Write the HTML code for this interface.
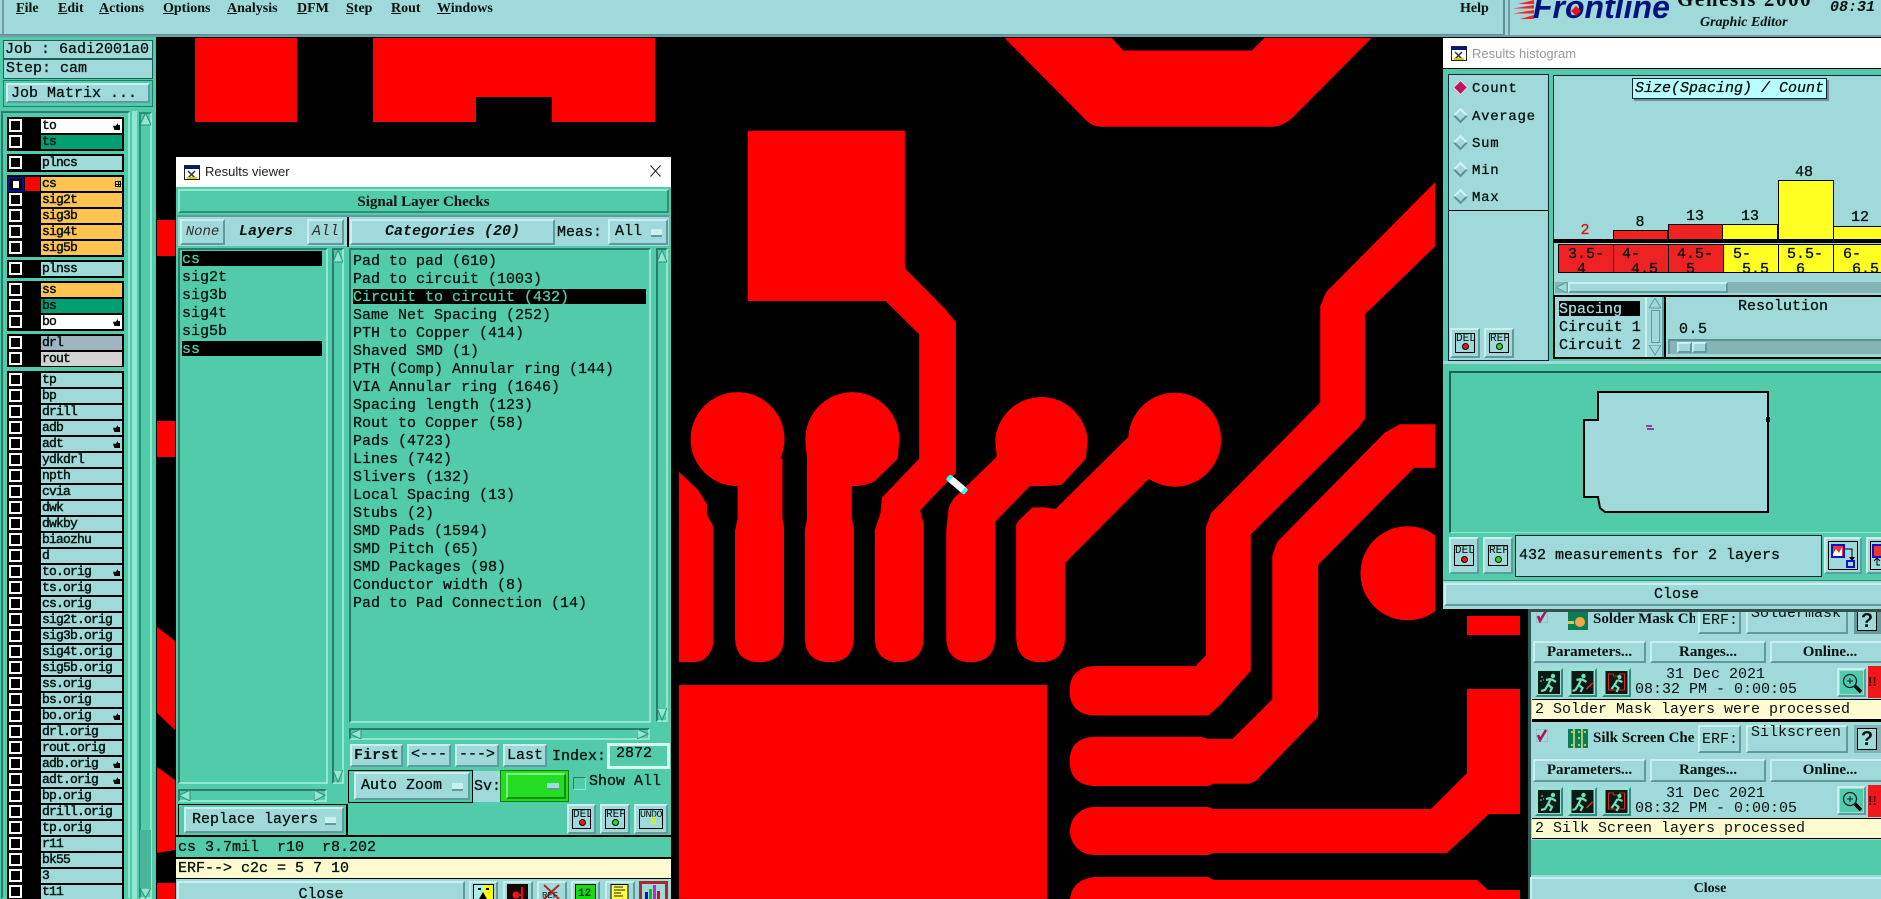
<!DOCTYPE html>
<html><head><meta charset="utf-8"><title>Genesis 2000</title>
<style>
html,body{margin:0;padding:0;background:#000;width:1881px;height:899px;overflow:hidden}
#p{position:relative;width:1881px;height:899px;overflow:hidden;background:#000;font-family:"Liberation Mono",monospace;color:#04130f}
#p div,#p svg.a{position:absolute;box-sizing:border-box}
.t{white-space:pre;font:15px/16px "Liberation Mono",monospace;-webkit-text-stroke:.3px;margin-top:1px}
.s{white-space:pre;font:bold 14px/16px "Liberation Serif",serif}
.c{text-align:center}
.b{background:#9fd9d9;border:2px solid;border-color:#c8f0ee #5f9a9c #5f9a9c #c8f0ee;white-space:pre;text-align:center;font:15px/20px "Liberation Mono",monospace;-webkit-text-stroke:.3px;padding-top:1px}
.sb{font:bold 15px/18px "Liberation Serif",serif;-webkit-text-stroke:0;padding-top:0}
.g{background:#52cbab;border:2px solid;border-color:#8fe8cf #2e8f78 #2e8f78 #8fe8cf}
.li{background:#52cbab;border:2px solid;border-color:#2a7d6c #8fe8cf #8fe8cf #2a7d6c}
.k{background:#000}
.r{left:41px;width:81px;height:14px;background:#9fd9d9;font:13px/14px "Liberation Mono",monospace;letter-spacing:-.8px;-webkit-text-stroke:.45px;padding-left:1px;white-space:pre}
.r:before{content:"";position:absolute;left:-32px;top:0;width:13px;height:13px;background:#000;border:2px solid #fff;box-sizing:border-box}
.r i{position:absolute;right:2px;top:4px;width:7px;height:7px;background:#000;clip-path:polygon(0 40%,40% 40%,70% 0,70% 30%,100% 30%,100% 100%,20% 100%)}
.o{background:#ffc34f}.w{background:#fff}.e{background:#009e73}
.d{background:#000;border:1px solid #000}
.bx{background:#9fd9d9;border:2px solid;border-color:#c8f0ee #5f9a9c #5f9a9c #c8f0ee}
.in{left:3px;top:3px;right:3px;bottom:3px;border:1px solid #000;font:11px/11px "Liberation Mono",monospace;text-align:center;overflow:hidden}
.dot{left:50%;margin-left:-3px;bottom:2px;width:7px;height:7px;border-radius:50%;border:1px solid #000}
.rd{left:0;width:11px;height:11px;transform:rotate(45deg);border:2px solid;border-color:#d6f3f2 #5f8f92 #5f8f92 #d6f3f2;box-sizing:border-box}
</style></head><body><div id="p">

<!-- artwork -->
<svg class="a" style="left:0;top:0" width="1881" height="899" viewBox="0 0 1881 899">
<g fill="#f00">
<rect x="195" y="38" width="102" height="84"/>
<path d="M373,38H655V122H552V97H476V122H373Z"/>
<rect x="157" y="220" width="18" height="36"/>
<rect x="157" y="421" width="18" height="36"/>
<path d="M157,627L175,641V730L157,713Z"/>
<path d="M157,767L175,780V850L157,853Z"/>
<rect x="157" y="883" width="18" height="16"/>
<g transform="translate(660,0) scale(.5102,.5733)">
<path d="M675,66H885L908,88H1160L1185,66H1395L1240,205Q1220,221 1200,221H865Q845,221 830,205Z"/>
<path d="M37,823L75,855L92,880V897L104,918V1125Q95,1155 65,1155H37Z"/>
<ellipse cx="152" cy="766" rx="92" ry="82"/>
<path d="M152,800H240V905L243,920V1110Q243,1155 195,1155Q147,1155 147,1110V925L152,905Z"/>
<path d="M285,766A92,82 0 0 1 469,766L466,800L420,840Q400,848 377,848Q330,848 300,825Q285,800 285,766Z"/>
<path d="M288,790H376V905L380,920V1110Q380,1155 332,1155Q284,1155 284,1110V925L288,905Z"/>
<path d="M172,228H480V468L560,540L580,562V825L510,890L517,915V1110Q517,1155 469,1155Q421,1155 421,1110V925L432,895L435,868L508,800V583L442,525H172Z"/>
<path d="M561,1110V925L566,885L575,870L660,797L657,766A91,82 0 0 1 838,766L835,800L788,845Q770,848 725,848L657,910V1110Q657,1155 609,1155Q561,1155 561,1110Z"/>
<path d="M698,1110V915L703,908L730,885H755L775,888L918,762A91,82 0 1 1 958,835L794,982V1110Q794,1155 746,1155Q698,1155 698,1110Z"/>
<path d="M1519,318L1305,510L1294,535V702L1080,895L1070,920V1143L1050,1162H850Q803,1165 803,1205Q803,1245 850,1248H1075L1100,1228L1158,1170V932L1370,745L1382,730V548L1519,430Z"/>
<path d="M1519,740H1450L1420,755L1210,945L1200,970V1220L1122,1289H1075L1060,1285H850Q803,1288 803,1328Q803,1368 850,1371H1075L1085,1367H1155L1168,1362L1290,1250V985L1478,816H1519Z"/>
<ellipse cx="1465" cy="1000" rx="92" ry="82"/>
<rect x="37" y="1195" width="722" height="373"/>
</g>
<path d="M1094,807H1208L1214,809H1431L1467,773V689H1520V814H1489L1447,853H1214L1208,855H1094A24,24 0 0 1 1094,807Z"/>
<path d="M1094,877H1208L1214,880H1477L1488,890H1520V899H1070Q1072,880 1094,877Z"/>
<rect x="1467" y="616" width="53" height="19"/>
</g>
<rect x="1435" y="37" width="8" height="575" fill="#000"/>
<g transform="translate(957,484.5) rotate(40)"><rect x="-12" y="-3.5" width="24" height="7" rx="2" fill="#3ff"/><rect x="-8" y="-3.5" width="16" height="7" fill="#fff"/></g>
</svg>

<!-- top bar -->
<div style="left:0;top:0;width:1881px;height:37px;background:#9fd9d9;border-bottom:2px solid #6f9fa2"></div>
<div style="left:2px;top:0;width:2px;height:35px;background:#6f9fa2"></div>
<div style="left:0;top:34px;width:1504px;height:1px;background:#5f8f92"></div>
<div style="left:1503px;top:0;width:2px;height:35px;background:#5f8f92"></div>
<div style="left:1508px;top:0;width:2px;height:36px;background:#6f9fa2"></div>
<div class="s" style="left:16px;top:1px"><u>F</u>ile</div>
<div class="s" style="left:58px;top:1px"><u>E</u>dit</div>
<div class="s" style="left:99px;top:1px"><u>A</u>ctions</div>
<div class="s" style="left:163px;top:1px"><u>O</u>ptions</div>
<div class="s" style="left:227px;top:1px"><u>A</u>nalysis</div>
<div class="s" style="left:297px;top:1px"><u>D</u>FM</div>
<div class="s" style="left:346px;top:1px"><u>S</u>tep</div>
<div class="s" style="left:391px;top:1px"><u>R</u>out</div>
<div class="s" style="left:437px;top:1px"><u>W</u>indows</div>
<div class="s" style="left:1460px;top:1px">Help</div>
<svg class="a" style="left:1512px;top:0" width="24" height="22"><path d="M22,0L6,4H22ZM22,5L1,8.5H22ZM22,10L1,13.5H22ZM22,15L8,19H22Z" fill="#f22"/></svg>
<div style="left:1533px;top:-11px;font:italic bold 32px/36px 'Liberation Sans',sans-serif;color:#00107c;white-space:pre">Frontline</div>
<svg class="a" style="left:1570px;top:5px" width="12" height="12"><path d="M6,1L11,6L6,11L1,6Z" fill="#e11"/></svg>
<div style="left:1677px;top:-12px;font:bold 21px/22px 'Liberation Serif',serif;letter-spacing:1.6px;white-space:pre;color:#04130f">Genesis 2000</div>
<div style="left:1700px;top:15px;font:italic bold 14px/16px 'Liberation Serif',serif;white-space:pre">Graphic Editor</div>
<div style="left:1830px;top:0;font:italic bold 15px/16px 'Liberation Mono',monospace;white-space:pre">08:31</div>

<!-- left panel -->
<div style="left:0;top:37px;width:156px;height:862px;background:#52cbab"></div>
<div style="left:3px;top:40px;width:150px;height:19px;background:#9fd9d9;border:1px solid #1d5f52"></div>
<div style="left:3px;top:59px;width:150px;height:20px;background:#9fd9d9;border:1px solid #1d5f52"></div>
<div class="t" style="left:5px;top:41px">Job : 6adi2001a0</div>
<div class="t" style="left:6px;top:60px">Step: cam</div>
<div style="left:3px;top:80px;width:150px;height:27px;background:#52cbab;border:1px solid #1d7f6a"></div>
<div class="b" style="left:6px;top:83px;width:144px;height:20px;text-align:left;padding-left:3px;line-height:16px">Job Matrix ...</div>
<div style="left:1px;top:111px;width:129px;height:788px;border:2px solid;border-color:#2a7d6c #8fe8cf transparent #2a7d6c"></div>
<div style="left:132px;top:111px;width:5px;height:788px;background:#8fe8cf"></div>
<div style="left:139px;top:112px;width:13px;height:787px;background:#52cbab;border:2px solid;border-color:#2e8f78 #8fe8cf #8fe8cf #2e8f78"></div>
<svg class="a" style="left:140px;top:113px" width="11" height="13"><path d="M5.5,0L11,12H0Z" fill="#8fe8cf" stroke="#2e8f78"/></svg>
<div style="left:140px;top:830px;width:11px;height:58px;background:#4ab59a"></div>
<svg class="a" style="left:140px;top:888px" width="11" height="11"><path d="M5.5,10L11,0H0Z" fill="#8fe8cf" stroke="#2e8f78"/></svg>

<div class="k" style="left:7px;top:117px;width:117px;height:34px"></div>
<div class="k" style="left:7px;top:154px;width:117px;height:18px"></div>
<div class="k" style="left:7px;top:175px;width:117px;height:82px"></div>
<div class="k" style="left:7px;top:260px;width:117px;height:18px"></div>
<div class="k" style="left:7px;top:281px;width:117px;height:50px"></div>
<div class="k" style="left:7px;top:334px;width:117px;height:33px"></div>
<div class="k" style="left:7px;top:371px;width:117px;height:528px"></div>

<div class="r w" style="top:119px">to<i></i></div>
<div class="r e" style="top:135px">ts</div>
<div class="r" style="top:156px">plncs</div>
<div class="r o" style="top:177px">cs</div>
<div class="r o" style="top:193px">sig2t</div>
<div class="r o" style="top:209px">sig3b</div>
<div class="r o" style="top:225px">sig4t</div>
<div class="r o" style="top:241px">sig5b</div>
<div class="r" style="top:262px">plnss</div>
<div class="r o" style="top:283px">ss</div>
<div class="r e" style="top:299px">bs</div>
<div class="r w" style="top:315px">bo<i></i></div>
<div class="r" style="top:336px;background:#9fb5bf">drl</div>
<div class="r" style="top:352px;background:#d3d3d3">rout</div>
<div class="r" style="top:373px">tp</div>
<div class="r" style="top:389px">bp</div>
<div class="r" style="top:405px">drill</div>
<div class="r" style="top:421px">adb<i></i></div>
<div class="r" style="top:437px">adt<i></i></div>
<div class="r" style="top:453px">ydkdrl</div>
<div class="r" style="top:469px">npth</div>
<div class="r" style="top:485px">cvia</div>
<div class="r" style="top:501px">dwk</div>
<div class="r" style="top:517px">dwkby</div>
<div class="r" style="top:533px">biaozhu</div>
<div class="r" style="top:549px">d</div>
<div class="r" style="top:565px">to.orig<i></i></div>
<div class="r" style="top:581px">ts.orig</div>
<div class="r" style="top:597px">cs.orig</div>
<div class="r" style="top:613px">sig2t.orig</div>
<div class="r" style="top:629px">sig3b.orig</div>
<div class="r" style="top:645px">sig4t.orig</div>
<div class="r" style="top:661px">sig5b.orig</div>
<div class="r" style="top:677px">ss.orig</div>
<div class="r" style="top:693px">bs.orig</div>
<div class="r" style="top:709px">bo.orig<i></i></div>
<div class="r" style="top:725px">drl.orig</div>
<div class="r" style="top:741px">rout.orig</div>
<div class="r" style="top:757px">adb.orig<i></i></div>
<div class="r" style="top:773px">adt.orig<i></i></div>
<div class="r" style="top:789px">bp.orig</div>
<div class="r" style="top:805px">drill.orig</div>
<div class="r" style="top:821px">tp.orig</div>
<div class="r" style="top:837px">r11</div>
<div class="r" style="top:853px">bk55</div>
<div class="r" style="top:869px">3</div>
<div class="r" style="top:885px">t11</div>
<div style="left:8px;top:177px;width:16px;height:15px;background:#00108f"></div>
<div style="left:10px;top:179px;width:12px;height:11px;background:#000;border:2px solid #000"></div>
<div style="left:13px;top:181px;width:6px;height:7px;background:#fff"></div>
<div style="left:25px;top:177px;width:15px;height:14px;background:#f00"></div>
<div style="left:115px;top:181px;width:6px;height:6px;border:1px solid #000;background:linear-gradient(#000,#000) center/100% 1px no-repeat,linear-gradient(#000,#000) center/1px 100% no-repeat"></div>

<!-- results viewer -->
<div style="left:176px;top:157px;width:495px;height:742px;background:#52cbab"></div>
<div style="left:176px;top:157px;width:495px;height:30px;background:#fff"></div>
<svg class="a" style="left:184px;top:165px" width="16" height="15"><rect x=".5" y=".5" width="15" height="14" fill="#fff" stroke="#222"/><rect x="1" y="1" width="14" height="3" fill="#001a80"/><path d="M4,6L11,13M11,6L4,13" stroke="#333" stroke-width="1.5"/><path d="M3,13H13" stroke="#cc0" stroke-width="2"/></svg>
<div style="left:205px;top:164px;font:13px/16px 'Liberation Sans',sans-serif;color:#222;white-space:pre">Results viewer</div>
<svg class="a" style="left:650px;top:165px" width="11" height="12"><path d="M.5,.5L10.5,11.5M10.5,.5L.5,11.5" stroke="#222" stroke-width="1"/></svg>

<div class="g c" style="left:178px;top:189px;width:491px;height:24px;font:bold 15px/22px 'Liberation Serif',serif;white-space:pre">Signal Layer Checks</div>
<div class="k" style="left:177px;top:215px;width:492px;height:2px;background:#5f9a9c"></div>
<div style="left:178px;top:217px;width:491px;height:29px;background:#9fd9d9"></div>
<div style="left:347px;top:217px;width:2px;height:30px;background:#000"></div>
<div class="b" style="left:180px;top:219px;width:45px;height:26px;font-style:italic;font-size:14px;-webkit-text-stroke:0;color:#333">None</div>
<div class="b" style="left:228px;top:219px;width:76px;height:26px;font-style:italic;font-weight:bold;-webkit-text-stroke:0;border-color:#9fd9d9">Layers</div>
<div class="b" style="left:307px;top:219px;width:37px;height:26px;font-style:italic;-webkit-text-stroke:0;color:#333">All</div>
<div class="b" style="left:350px;top:219px;width:205px;height:26px;font-style:italic;font-weight:bold;-webkit-text-stroke:0;line-height:20px">Categories (20)</div>
<div class="t" style="left:557px;top:224px">Meas:</div>
<div class="b" style="left:608px;top:219px;width:60px;height:26px;text-align:left;padding-left:5px;line-height:20px">All<span style="position:absolute;right:4px;top:8px;width:11px;height:6px;background:#c8f0ee;border-bottom:2px solid #5f9a9c"></span></div>

<!-- left list -->
<div class="li" style="left:178px;top:248px;width:150px;height:536px"></div>
<div class="k" style="left:182px;top:251px;width:140px;height:15px"></div>
<div class="k" style="left:182px;top:341px;width:140px;height:15px"></div>
<div class="t" style="left:182px;top:251px;color:#52cbab">cs</div>
<div class="t" style="left:182px;top:269px">sig2t</div>
<div class="t" style="left:182px;top:287px">sig3b</div>
<div class="t" style="left:182px;top:305px">sig4t</div>
<div class="t" style="left:182px;top:323px">sig5b</div>
<div class="t" style="left:182px;top:341px;color:#52cbab">ss</div>
<div class="li" style="left:332px;top:248px;width:12px;height:536px"></div>
<svg class="a" style="left:333px;top:250px" width="10" height="13"><path d="M5,0L10,12H0Z" fill="#8fe8cf" stroke="#2e8f78"/></svg>
<svg class="a" style="left:333px;top:770px" width="10" height="13"><path d="M5,12L10,0H0Z" fill="#8fe8cf" stroke="#2e8f78"/></svg>
<div class="li" style="left:178px;top:789px;width:149px;height:13px"></div>
<svg class="a" style="left:179px;top:790px" width="12" height="11"><path d="M0,5.5L11,0V11Z" fill="#8fe8cf" stroke="#2e8f78"/></svg>
<svg class="a" style="left:314px;top:790px" width="12" height="11"><path d="M11,5.5L0,0V11Z" fill="#8fe8cf" stroke="#2e8f78"/></svg>
<div class="k" style="left:178px;top:804px;width:170px;height:32px"></div>
<div style="left:179px;top:805px;width:167px;height:30px;background:#52cbab"></div>
<div class="b" style="left:184px;top:807px;width:160px;height:26px;text-align:left;padding-left:6px;line-height:20px">Replace layers<span style="position:absolute;right:6px;top:8px;width:11px;height:6px;background:#c8f0ee;border-bottom:2px solid #5f9a9c"></span></div>

<!-- categories -->
<div class="li" style="left:349px;top:248px;width:302px;height:475px"></div>
<div class="k" style="left:353px;top:289px;width:293px;height:15px"></div>
<div class="t" style="left:353px;top:252px;line-height:18px">Pad to pad (610)
Pad to circuit (1003)
<span style="color:#52cbab">Circuit to circuit (432)</span>
Same Net Spacing (252)
PTH to Copper (414)
Shaved SMD (1)
PTH (Comp) Annular ring (144)
VIA Annular ring (1646)
Spacing length (123)
Rout to Copper (58)
Pads (4723)
Lines (742)
Slivers (132)
Local Spacing (13)
Stubs (2)
SMD Pads (1594)
SMD Pitch (65)
SMD Packages (98)
Conductor width (8)
Pad to Pad Connection (14)</div>
<div class="li" style="left:656px;top:248px;width:12px;height:474px"></div>
<svg class="a" style="left:657px;top:250px" width="10" height="13"><path d="M5,0L10,12H0Z" fill="#8fe8cf" stroke="#2e8f78"/></svg>
<svg class="a" style="left:657px;top:708px" width="10" height="13"><path d="M5,12L10,0H0Z" fill="#8fe8cf" stroke="#2e8f78"/></svg>
<div class="li" style="left:349px;top:728px;width:301px;height:12px"></div>
<svg class="a" style="left:350px;top:729px" width="12" height="10"><path d="M0,5L11,0V10Z" fill="#8fe8cf" stroke="#2e8f78"/></svg>
<svg class="a" style="left:637px;top:729px" width="12" height="10"><path d="M11,5L0,0V10Z" fill="#8fe8cf" stroke="#2e8f78"/></svg>

<div class="b" style="left:350px;top:744px;width:53px;height:23px;font-weight:bold;-webkit-text-stroke:0;line-height:18px">First</div>
<div class="b" style="left:407px;top:744px;width:44px;height:23px;line-height:16px">&lt;---</div>
<div class="b" style="left:455px;top:744px;width:44px;height:23px;line-height:16px">---&gt;</div>
<div class="b" style="left:503px;top:744px;width:44px;height:23px;line-height:18px">Last</div>
<div class="t" style="left:552px;top:748px">Index:</div>
<div style="left:607px;top:743px;width:63px;height:26px;border:3px solid;border-color:#d8f8f0;background:#52cbab"></div>
<div class="t" style="left:616px;top:745px">2872</div>

<div class="k" style="left:348px;top:770px;width:125px;height:33px"></div>
<div style="left:349px;top:771px;width:123px;height:31px;background:#52cbab"></div>
<div class="b" style="left:354px;top:772px;width:116px;height:28px;text-align:left;padding-left:5px;line-height:21px">Auto Zoom<span style="position:absolute;right:5px;top:9px;width:11px;height:6px;background:#c8f0ee;border-bottom:2px solid #5f9a9c"></span></div>
<div style="left:473px;top:771px;width:27px;height:31px;background:#9fd9d9"></div>
<div class="t" style="left:474px;top:778px">Sv:</div>
<div style="left:500px;top:770px;width:69px;height:32px;background:#22dd22;border:1px solid #0d7d0d"></div>
<div style="left:506px;top:773px;width:60px;height:26px;background:#22dd22;border:2px solid;border-color:#7ff07f #0f8f0f #0f8f0f #7ff07f"></div>
<div style="left:547px;top:783px;width:12px;height:7px;background:#9fd9d9;border-bottom:2px solid #5f9a9c"></div>
<div style="left:573px;top:777px;width:13px;height:13px;background:#52cbab;border:1px solid;border-color:#2a7d6c #8fe8cf #8fe8cf #2a7d6c"></div>
<div class="t" style="left:589px;top:773px">Show All</div>

<div class="bx" style="left:567px;top:804px;width:29px;height:30px"><div class="in">DEL<div class="dot" style="background:#f11"></div></div></div>
<div class="bx" style="left:600px;top:804px;width:30px;height:30px"><div class="in">REF<div class="dot" style="background:#2d2"></div></div></div>
<div class="bx" style="left:634px;top:804px;width:34px;height:30px"><div class="in" style="font-size:10px;letter-spacing:-.5px">UNDO<div style="left:9px;bottom:1px;width:8px;height:10px;color:#ee0;font:bold 11px/10px 'Liberation Mono'">5</div></div></div>

<div class="k" style="left:176px;top:835px;width:495px;height:2px"></div>
<div class="t" style="left:178px;top:839px">cs 3.7mil  r10  r8.202</div>
<div class="k" style="left:176px;top:857px;width:495px;height:2px"></div>
<div style="left:176px;top:859px;width:495px;height:19px;background:#fffbd0"></div>
<div class="t" style="left:178px;top:860px">ERF--&gt; c2c = 5 7 10</div>
<div class="k" style="left:176px;top:878px;width:495px;height:1px"></div>
<div style="left:176px;top:879px;width:495px;height:20px;background:#9fd9d9"></div>
<div class="b" style="left:177px;top:881px;width:288px;height:26px;line-height:22px">Close</div>

<div class="bx" style="left:469px;top:881px;width:29px;height:26px"></div>
<svg class="a" style="left:473px;top:884px" width="21" height="15"><rect width="21" height="15" fill="#000"/><rect x="10" y="1" width="10" height="14" fill="#ff0"/><rect x="1" y="1" width="9" height="14" fill="#aee"/><path d="M6,15L10,8L14,15Z" fill="#000"/><rect x="5" y="4" width="3" height="2"/><rect x="13" y="4" width="3" height="2"/></svg>
<div class="bx" style="left:503px;top:881px;width:30px;height:26px"></div>
<svg class="a" style="left:507px;top:884px" width="21" height="15"><rect width="21" height="15" fill="#1a0505"/><circle cx="9" cy="11" r="3.5" fill="#f11"/><path d="M11,11H15M15,3V15" stroke="#d11" stroke-width="2"/></svg>
<div class="bx" style="left:537px;top:881px;width:30px;height:26px"></div>
<svg class="a" style="left:541px;top:884px" width="21" height="15"><path d="M3,1L18,15M18,1L3,15" stroke="#b22" stroke-width="2"/><text x="1" y="14" font-family="Liberation Mono" font-size="9" fill="#222">REF</text></svg>
<div class="bx" style="left:571px;top:881px;width:29px;height:26px"></div>
<svg class="a" style="left:575px;top:884px" width="21" height="15"><rect x=".5" y=".5" width="20" height="15" fill="#1d1" stroke="#000"/><text x="3" y="12" font-family="Liberation Mono" font-weight="bold" font-size="11" fill="#032">12</text></svg>
<div class="bx" style="left:605px;top:881px;width:30px;height:26px"></div>
<svg class="a" style="left:609px;top:884px" width="21" height="15"><rect x="2" y=".5" width="17" height="15" fill="#ff4" stroke="#000"/><path d="M5,3H14M5,6H16M5,9H12M5,12H14" stroke="#222"/></svg>
<div style="left:639px;top:881px;width:29px;height:18px;background:#a82a2a"></div>
<svg class="a" style="left:642px;top:884px" width="23" height="15"><rect width="23" height="15" fill="#9fd9d9"/><rect x="3" y="8" width="3" height="7" fill="#11c"/><rect x="7" y="5" width="3" height="10" fill="#1b1"/><rect x="11" y="1" width="3" height="14" fill="#c2c"/><rect x="15" y="7" width="3" height="8" fill="#c11"/></svg>

<!-- checks window -->
<div style="left:1528px;top:600px;width:353px;height:299px;background:#9fd9d9"></div>
<div style="left:1528px;top:600px;width:3px;height:299px;background:#2f5a55"></div>
<svg class="a" style="left:1536px;top:610px" width="12" height="13"><rect width="12" height="13" fill="#9fd9d9" stroke="#7fb5b5"/><path d="M2,6L4,11L10,1" stroke="#b0105a" stroke-width="2.5" fill="none"/></svg>
<svg class="a" style="left:1568px;top:610px" width="20" height="20"><rect width="20" height="20" fill="#0a7d55"/><circle cx="12" cy="12" r="5" fill="#f0a848"/><rect y="11" width="6" height="3" fill="#e0c060"/></svg>
<div class="s" style="left:1593px;top:611px;font-size:15px;width:102px;overflow:hidden">Solder Mask Check</div>
<div class="bx t" style="left:1698px;top:607px;width:43px;height:27px;padding:2px 0 0 2px;line-height:20px;-webkit-text-stroke:0;margin:0">ERF:</div>
<div class="bx" style="left:1746px;top:607px;width:102px;height:27px;overflow:hidden"><div class="t" style="left:3px;top:-4px;-webkit-text-stroke:0">Soldermask</div></div>
<div style="left:1854px;top:610px;width:27px;height:24px;background:#5f9a9c"></div>
<div style="left:1857px;top:610px;width:20px;height:21px;background:#9fd9d9;border:1px solid #000;font:bold 20px/20px 'Liberation Sans',sans-serif;text-align:center">?</div>

<div class="b sb" style="left:1533px;top:641px;width:113px;height:22px">Parameters...</div>
<div class="b sb" style="left:1650px;top:641px;width:116px;height:22px">Ranges...</div>
<div class="b sb" style="left:1770px;top:641px;width:120px;height:22px;">Online...</div>

<div class="bx" style="left:1535px;top:668px;width:28px;height:29px;border-color:#8fe8cf #2e8f78 #2e8f78 #8fe8cf"></div>
<svg class="a" style="left:1538px;top:671px" width="22" height="23" viewBox="0 0 22 23"><rect width="22" height="23" fill="#0b1a14"/><circle cx="15" cy="5" r="2.2" fill="#6fe0b8"/><path d="M13,8L10,14L14,17L12,21M10,14L7,19L3,20M13,8L18,11M13,8L8,9" stroke="#6fe0b8" stroke-width="2.2" fill="none"/><path d="M3,6h2M5,9h1M2,10h2" stroke="#6fe0b8"/></svg>
<div class="bx" style="left:1568px;top:668px;width:29px;height:29px;border-color:#8fe8cf #2e8f78 #2e8f78 #8fe8cf"></div>
<svg class="a" style="left:1571px;top:671px" width="23" height="23" viewBox="0 0 22 23"><rect width="22" height="23" fill="#0b1a14"/><circle cx="12" cy="5" r="2.2" fill="#6fe0b8"/><path d="M10,8L7,14L11,17L9,21M7,14L4,19L1,20M10,8L15,11M10,8L5,9" stroke="#6fe0b8" stroke-width="2.2" fill="none"/><path d="M15,18L21,12" stroke="#e22" stroke-width="1.5"/></svg>
<div class="bx" style="left:1602px;top:668px;width:29px;height:29px;border-color:#8fe8cf #2e8f78 #2e8f78 #8fe8cf"></div>
<svg class="a" style="left:1605px;top:671px" width="23" height="23" viewBox="0 0 22 23"><rect width="22" height="23" fill="#0b1a14"/><path d="M3,3H8V5H14V3H19V19H3Z" fill="none" stroke="#d22"/><circle cx="14" cy="6" r="2" fill="#6fe0b8"/><path d="M12,9L9,14L13,17L11,21M9,14L6,18M12,9L17,11" stroke="#6fe0b8" stroke-width="2.2" fill="none"/></svg>

<div class="t c" style="left:1635px;top:666px;width:161px;-webkit-text-stroke:0">31 Dec 2021</div>
<div class="t" style="left:1635px;top:681px;-webkit-text-stroke:0">08:32 PM - 0:00:05</div>
<div class="bx" style="left:1837px;top:668px;width:29px;height:29px"></div>
<svg class="a" style="left:1840px;top:671px" width="23" height="23"><rect width="23" height="23" fill="#52cbab"/><circle cx="10" cy="10" r="6.5" fill="none" stroke="#123" stroke-width="1.3"/><path d="M7,10H13M10,7V13" stroke="#123"/><path d="M15,15L21,21" stroke="#000" stroke-width="3.5"/></svg>
<div style="left:1868px;top:666px;width:13px;height:32px;background:#f01818;color:#400;font:bold 13px/32px 'Liberation Sans',sans-serif;white-space:pre">!!</div>

<div style="left:1532px;top:699px;width:349px;height:21px;background:#fffbd0;border-top:1px solid #000;border-bottom:1px solid #000"></div>
<div class="t" style="left:1535px;top:701px;-webkit-text-stroke:0">2 Solder Mask layers were processed</div>
<div class="k" style="left:1532px;top:720px;width:349px;height:2px"></div>

<svg class="a" style="left:1536px;top:729px" width="12" height="13"><rect width="12" height="13" fill="#9fd9d9" stroke="#7fb5b5"/><path d="M2,6L4,11L10,1" stroke="#b0105a" stroke-width="2.5" fill="none"/></svg>
<svg class="a" style="left:1568px;top:729px" width="20" height="19"><rect width="20" height="19" fill="#0a7d55"/><path d="M3,3h2M10,3h2M16,3h2M3,16h2M10,16h2M16,16h2M10,9h2M6,0V19M14,0V19" stroke="#e8e070" stroke-width="1.5"/></svg>
<div class="s" style="left:1593px;top:730px;font-size:15px;width:102px;overflow:hidden">Silk Screen Check</div>
<div class="bx t" style="left:1698px;top:725px;width:43px;height:28px;padding:3px 0 0 2px;line-height:20px;-webkit-text-stroke:0;margin:0">ERF:</div>
<div class="bx" style="left:1746px;top:725px;width:102px;height:28px"></div>
<div class="t" style="left:1751px;top:724px;-webkit-text-stroke:0">Silkscreen</div>
<div style="left:1854px;top:725px;width:27px;height:28px;background:#7fb5b5"></div>
<div style="left:1857px;top:728px;width:20px;height:22px;background:#9fd9d9;border:1px solid #000;font:bold 20px/20px 'Liberation Sans',sans-serif;text-align:center">?</div>

<div class="b sb" style="left:1533px;top:759px;width:113px;height:23px">Parameters...</div>
<div class="b sb" style="left:1650px;top:759px;width:116px;height:23px">Ranges...</div>
<div class="b sb" style="left:1770px;top:759px;width:120px;height:23px">Online...</div>

<div class="bx" style="left:1535px;top:787px;width:28px;height:29px;border-color:#8fe8cf #2e8f78 #2e8f78 #8fe8cf"></div>
<svg class="a" style="left:1538px;top:790px" width="22" height="23" viewBox="0 0 22 23"><rect width="22" height="23" fill="#0b1a14"/><circle cx="15" cy="5" r="2.2" fill="#6fe0b8"/><path d="M13,8L10,14L14,17L12,21M10,14L7,19L3,20M13,8L18,11M13,8L8,9" stroke="#6fe0b8" stroke-width="2.2" fill="none"/><path d="M3,6h2M5,9h1M2,10h2" stroke="#6fe0b8"/></svg>
<div class="bx" style="left:1568px;top:787px;width:29px;height:29px;border-color:#8fe8cf #2e8f78 #2e8f78 #8fe8cf"></div>
<svg class="a" style="left:1571px;top:790px" width="23" height="23" viewBox="0 0 22 23"><rect width="22" height="23" fill="#0b1a14"/><circle cx="12" cy="5" r="2.2" fill="#6fe0b8"/><path d="M10,8L7,14L11,17L9,21M7,14L4,19L1,20M10,8L15,11M10,8L5,9" stroke="#6fe0b8" stroke-width="2.2" fill="none"/><path d="M15,18L21,12" stroke="#e22" stroke-width="1.5"/></svg>
<div class="bx" style="left:1602px;top:787px;width:29px;height:29px;border-color:#8fe8cf #2e8f78 #2e8f78 #8fe8cf"></div>
<svg class="a" style="left:1605px;top:790px" width="23" height="23" viewBox="0 0 22 23"><rect width="22" height="23" fill="#0b1a14"/><path d="M3,3H8V5H14V3H19V19H3Z" fill="none" stroke="#d22"/><circle cx="14" cy="6" r="2" fill="#6fe0b8"/><path d="M12,9L9,14L13,17L11,21M9,14L6,18M12,9L17,11" stroke="#6fe0b8" stroke-width="2.2" fill="none"/></svg>

<div class="t c" style="left:1635px;top:785px;width:161px;-webkit-text-stroke:0">31 Dec 2021</div>
<div class="t" style="left:1635px;top:800px;-webkit-text-stroke:0">08:32 PM - 0:00:05</div>
<div class="bx" style="left:1837px;top:786px;width:29px;height:29px"></div>
<svg class="a" style="left:1840px;top:789px" width="23" height="23"><rect width="23" height="23" fill="#52cbab"/><circle cx="10" cy="10" r="6.5" fill="none" stroke="#123" stroke-width="1.3"/><path d="M7,10H13M10,7V13" stroke="#123"/><path d="M15,15L21,21" stroke="#000" stroke-width="3.5"/></svg>
<div style="left:1868px;top:785px;width:13px;height:32px;background:#f01818;color:#400;font:bold 13px/32px 'Liberation Sans',sans-serif;white-space:pre">!!</div>

<div style="left:1532px;top:818px;width:349px;height:21px;background:#fffbd0;border-top:1px solid #000;border-bottom:1px solid #000"></div>
<div class="t" style="left:1535px;top:820px;-webkit-text-stroke:0">2 Silk Screen layers processed</div>
<div style="left:1531px;top:840px;width:350px;height:35px;background:#52cbab"></div>
<div class="b sb" style="left:1530px;top:877px;width:360px;height:30px;font-size:14px;line-height:20px">Close</div>

<!-- histogram window -->
<div style="left:1528px;top:606px;width:353px;height:6px;background:#34504c"></div>
<div style="left:1443px;top:38px;width:438px;height:570px;background:#52cbab;box-shadow:0 1px 0 #9fd9d9"></div>
<div style="left:1443px;top:38px;width:438px;height:31px;background:#fff;border-bottom:1px solid #000"></div>
<svg class="a" style="left:1451px;top:46px" width="16" height="15"><rect x=".5" y=".5" width="15" height="14" fill="#fff" stroke="#222"/><rect x="1" y="1" width="14" height="3" fill="#001a80"/><path d="M4,6L11,13M11,6L4,13" stroke="#333" stroke-width="1.5"/><path d="M3,13H13" stroke="#cc0" stroke-width="2"/></svg>
<div style="left:1472px;top:46px;font:13px/16px 'Liberation Sans',sans-serif;color:#999;white-space:pre">Results histogram</div>

<div style="left:1448px;top:74px;width:101px;height:287px;background:#9fd9d9;border:1px solid #123"></div>
<div class="k" style="left:1449px;top:210px;width:99px;height:1px"></div>
<div class="rd" style="left:1455px;top:82px;background:#c0145c;border:1px solid #d6f3f2"></div>
<div class="rd" style="left:1455px;top:110px;background:#9fd9d9"></div>
<div class="rd" style="left:1455px;top:137px;background:#9fd9d9"></div>
<div class="rd" style="left:1455px;top:164px;background:#9fd9d9"></div>
<div class="rd" style="left:1455px;top:191px;background:#9fd9d9"></div>
<div class="t" style="left:1472px;top:80px;font-size:14px;letter-spacing:.7px">Count</div>
<div class="t" style="left:1472px;top:108px;font-size:14px;letter-spacing:.7px">Average</div>
<div class="t" style="left:1472px;top:135px;font-size:14px;letter-spacing:.7px">Sum</div>
<div class="t" style="left:1472px;top:162px;font-size:14px;letter-spacing:.7px">Min</div>
<div class="t" style="left:1472px;top:189px;font-size:14px;letter-spacing:.7px">Max</div>
<div class="bx" style="left:1450px;top:328px;width:30px;height:30px"><div class="in">DEL<div class="dot" style="background:#f11"></div></div></div>
<div class="bx" style="left:1484px;top:328px;width:30px;height:30px"><div class="in">REF<div class="dot" style="background:#2d2"></div></div></div>

<div style="left:1553px;top:75px;width:328px;height:284px;background:#9fd9d9;border-left:1px solid #123;border-top:1px solid #123"></div>
<div style="left:1632px;top:78px;width:195px;height:21px;background:#b8ffff;border:1px solid #123;box-shadow:2px 2px 0 #6f8f90;font:italic 15px/20px 'Liberation Mono',monospace;-webkit-text-stroke:.3px;text-align:center;white-space:pre">Size(Spacing) / Count</div>
<div style="left:1613px;top:230px;width:55px;height:10px;background:#ee2222;border:1px solid #000"></div>
<div style="left:1668px;top:224px;width:55px;height:16px;background:#ee2222;border:1px solid #000"></div>
<div style="left:1723px;top:224px;width:55px;height:16px;background:#ffff22;border:1px solid #000;border-left:0"></div>
<div style="left:1778px;top:180px;width:56px;height:60px;background:#ffff22;border:1px solid #000"></div>
<div style="left:1834px;top:226px;width:47px;height:14px;background:#ffff22;border-top:1px solid #000"></div>
<div class="k" style="left:1553px;top:239px;width:328px;height:4px"></div>
<div class="t c" style="left:1575px;top:222px;width:20px;color:#d11">2</div>
<div class="t c" style="left:1630px;top:214px;width:20px">8</div>
<div class="t c" style="left:1685px;top:208px;width:20px">13</div>
<div class="t c" style="left:1740px;top:208px;width:20px">13</div>
<div class="t c" style="left:1794px;top:164px;width:20px">48</div>
<div class="t c" style="left:1850px;top:209px;width:20px">12</div>
<div style="left:1558px;top:244px;width:323px;height:29px;background:#000"></div>
<div style="left:1559px;top:245px;width:54px;height:27px;background:#ee2222;overflow:hidden"><div class="t" style="left:9px;top:1px;line-height:15px">3.5-
 4</div></div>
<div style="left:1614px;top:245px;width:54px;height:27px;background:#ee2222;overflow:hidden"><div class="t" style="left:8px;top:1px;line-height:15px">4-
 4.5</div></div>
<div style="left:1669px;top:245px;width:54px;height:27px;background:#ee2222;overflow:hidden"><div class="t" style="left:8px;top:1px;line-height:15px">4.5-
 5</div></div>
<div style="left:1724px;top:245px;width:54px;height:27px;background:#ffff22;overflow:hidden"><div class="t" style="left:9px;top:1px;line-height:15px">5-
 5.5</div></div>
<div style="left:1779px;top:245px;width:54px;height:27px;background:#ffff22;overflow:hidden"><div class="t" style="left:8px;top:1px;line-height:15px">5.5-
 6</div></div>
<div style="left:1834px;top:245px;width:47px;height:27px;background:#ffff22;overflow:hidden"><div class="t" style="left:9px;top:1px;line-height:15px">6-
 6.5</div></div>
<div style="left:1555px;top:282px;width:326px;height:11px;background:#84b5b5"></div>
<svg class="a" style="left:1556px;top:282px" width="12" height="11"><path d="M0,5.5L11,0V11Z" fill="#9fd9d9" stroke="#5f9a9c"/></svg>
<div class="b" style="left:1568px;top:282px;width:160px;height:11px"></div>
<div class="k" style="left:1553px;top:295px;width:328px;height:2px"></div>
<div class="k" style="left:1553px;top:295px;width:2px;height:64px"></div>
<div class="k" style="left:1553px;top:357px;width:328px;height:2px"></div>
<div class="k" style="left:1559px;top:301px;width:81px;height:15px"></div>
<div class="t" style="left:1559px;top:301px;color:#9fd9d9">Spacing</div>
<div class="t" style="left:1559px;top:319px;letter-spacing:.1px">Circuit 1</div>
<div class="t" style="left:1559px;top:337px;letter-spacing:.1px">Circuit 2</div>
<div style="left:1645px;top:297px;width:19px;height:60px;background:#9fd9d9;border-left:2px solid #c8f0ee;border-right:2px solid #5f9a9c"></div>
<svg class="a" style="left:1649px;top:298px" width="12" height="11"><path d="M6,0L12,10H0Z" fill="#9fd9d9" stroke="#5f9a9c"/></svg>
<svg class="a" style="left:1649px;top:345px" width="12" height="11"><path d="M6,10L12,0H0Z" fill="#9fd9d9" stroke="#5f9a9c"/></svg>
<div style="left:1651px;top:310px;width:9px;height:33px;border:1px solid #5f9a9c"></div>
<div class="k" style="left:1664px;top:295px;width:2px;height:64px"></div>
<div class="t" style="left:1738px;top:298px;letter-spacing:0">Resolution</div>
<div class="t" style="left:1679px;top:321px;letter-spacing:.5px">0.5</div>
<div style="left:1668px;top:339px;width:213px;height:15px;background:#84b5b5;border-top:2px solid #5f8f92;border-left:2px solid #5f8f92"></div>
<div class="b" style="left:1677px;top:342px;width:15px;height:11px"></div>
<div class="b" style="left:1692px;top:342px;width:15px;height:11px"></div>

<!-- map -->
<div style="left:1443px;top:361px;width:438px;height:3px;background:#9fd9d9"></div>
<div style="left:1449px;top:371px;width:432px;height:162px;background:#52cbab;border-left:2px solid #1d5f52;border-top:2px solid #1d5f52;border-bottom:1px solid #8fe8cf"></div>
<svg class="a" style="left:1443px;top:361px" width="438" height="180"><path d="M155,31V59H141V136H155L157,147L162,151H325V31Z" fill="#9fd9d9" stroke="#000" stroke-width="2"/><rect x="323" y="56" width="4" height="5"/><path d="M203,65h6M204,68h7" stroke="#8a3fa8" stroke-width="2"/></svg>
<div class="bx" style="left:1449px;top:537px;width:30px;height:37px"><div class="in" style="top:6px;bottom:6px">DEL<div class="dot" style="background:#f11"></div></div></div>
<div class="bx" style="left:1483px;top:537px;width:30px;height:37px"><div class="in" style="top:6px;bottom:6px">REF<div class="dot" style="background:#2d2"></div></div></div>
<div style="left:1515px;top:535px;width:307px;height:42px;background:#9fd9d9;border:1px solid #123"></div>
<div class="t" style="left:1519px;top:547px;letter-spacing:0">432 measurements for 2 layers</div>
<div class="bx" style="left:1824px;top:537px;width:38px;height:37px"></div>
<svg class="a" style="left:1828px;top:541px" width="30" height="29"><rect x=".5" y=".5" width="29" height="28" fill="#9fd9d9" stroke="#000"/><rect x="4" y="4" width="12" height="12" fill="#e33" stroke="#11c" stroke-width="2"/><path d="M5,13l3,-5l3,4l3,-6v9H5Z" fill="#fff"/><path d="M17,8H24V18" stroke="#000" fill="none"/><path d="M21,16H27L24,20Z"/><rect x="19" y="20" width="7" height="6" fill="#9fd9d9" stroke="#11c" stroke-width="2"/></svg>
<div class="bx" style="left:1866px;top:537px;width:30px;height:37px"></div>
<svg class="a" style="left:1870px;top:541px" width="11" height="29"><rect x=".5" y=".5" width="15" height="28" fill="#9fd9d9" stroke="#000"/><rect x="3" y="4" width="10" height="12" fill="#e33" stroke="#11c" stroke-width="2"/><path d="M7,17V24H10M4,20L7,17L10,20" stroke="#000" fill="none"/></svg>
<div class="k" style="left:1443px;top:580px;width:438px;height:1px;background:#2e8f78"></div>
<div style="left:1443px;top:581px;width:438px;height:27px;background:#9fd9d9"></div>
<div class="b" style="left:1444px;top:583px;width:445px;height:23px;text-align:left;padding-left:208px;line-height:18px">Close</div>
</div></body></html>
